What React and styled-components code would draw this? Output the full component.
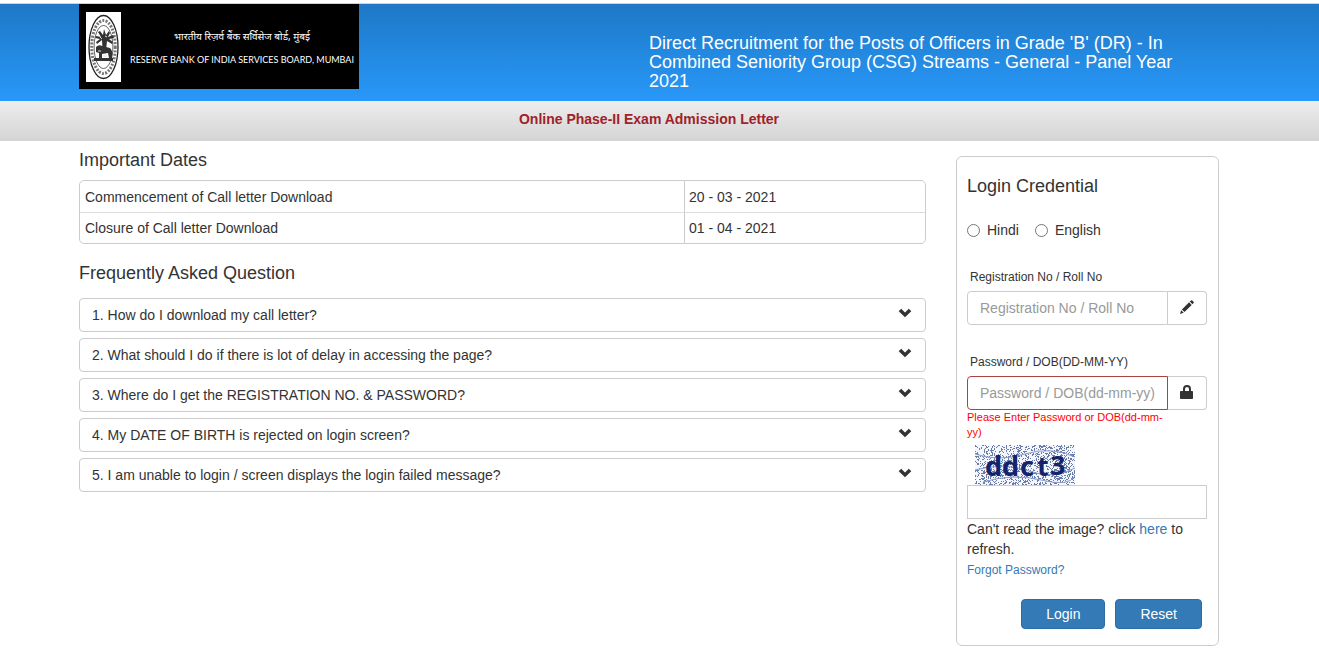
import React, { useState } from 'react';
import styled, { createGlobalStyle } from 'styled-components';

const GlobalStyle = createGlobalStyle`
  * {
    box-sizing: border-box;
  }

  body {
    margin: 0;
    background: #fff;
    color: #333;
    font-family: 'Liberation Sans', Arial, sans-serif;
    font-size: 14px;
    line-height: 20px;
  }

  a {
    color: #337ab7;
    text-decoration: none;
  }
`;

const Page = styled.div`
  padding-top: 3px;
`;

const Container = styled.div`
  width: calc(100% - 40px);
  max-width: 1140px;
  margin: 0 auto;
`;

const Band = styled.div`
  padding-right: 21px;
`;

const Header = styled(Band).attrs({ as: 'header' })`
  border-top: 1px solid #c9d3dc;
  background: linear-gradient(#1e78c6, #2898f9);
`;

const HeaderRow = styled(Container)`
  display: grid;
  grid-template-columns: 1fr 1fr;
  align-items: start;
  min-height: 97px;
`;

const Logo = styled.div`
  display: flex;
  align-items: center;
  gap: 9px;
  width: 280px;
  height: 85px;
  padding-left: 7px;
  background: #000;
  color: #fff;

  svg {
    flex-shrink: 0;
  }
`;

const LogoText = styled.div`
  display: flex;
  flex-direction: column;
  align-items: center;
  gap: 4px;
  padding-top: 2px;
  white-space: nowrap;
`;

const Hindi = styled.span`
  font-family: 'Noto Sans', 'Noto Sans Devanagari', sans-serif;
  font-size: 10px;
  line-height: 20px;
`;

const BoardName = styled.span`
  font-family: Lato, 'Liberation Sans', sans-serif;
  font-size: 9px;
  line-height: 20px;
`;

const Title = styled.h1`
  margin: 0;
  padding: 30px 30px 0 0;
  color: #fff;
  font-size: 18px;
  font-weight: 400;
  line-height: 19px;
`;

const SubBar = styled(Band)`
  height: 40px;
  padding-top: 8px;
  background: linear-gradient(#ededed, #d4d4d4);
  color: #a02128;
  font-weight: 700;
  text-align: center;
`;

const Columns = styled(Container)`
  display: grid;
  grid-template-columns: minmax(0, 847fr) minmax(240px, 263fr);
  gap: 30px;
  align-items: start;
`;

const Heading = styled.h2`
  margin: 0;
  font-size: 18px;
  font-weight: 400;
  line-height: 20px;
`;

const Info = styled.section`
  padding-top: 9px;

  ${Heading} + * {
    margin-top: 10px;
  }
`;

const DatesTable = styled.table`
  width: 100%;
  margin-bottom: 19px;
  border: 1px solid #ccc;
  border-radius: 5px;
  border-spacing: 0;

  td {
    height: 31px;
    padding: 5px 4px;
  }

  td:first-child {
    width: 605px;
    padding-left: 5px;
    border-right: 1px solid #ccc;
  }

  tr + tr td {
    border-top: 1px solid #ddd;
  }
`;

const FaqList = styled.div`
  display: flex;
  flex-direction: column;
  gap: 6px;
  padding-top: 5px;
`;

const FaqItem = styled.button`
  display: flex;
  justify-content: space-between;
  align-items: center;
  height: 34px;
  padding: 0 13px 0 12px;
  border: 1px solid #ccc;
  border-radius: 4px;
  background: #fff;
  color: #333;
  font: inherit;
  text-align: left;

  svg {
    margin-bottom: 4px;
  }
`;

const Card = styled.form`
  margin-top: 15px;
  padding: 19px 11px 16px 10px;
  border: 1px solid #ccc;
  border-radius: 6px;
`;

const Radios = styled.div`
  display: flex;
  gap: 16px;
  margin: 24px 0 27px;
`;

const RadioLabel = styled.label`
  display: flex;
  align-items: center;
  gap: 7px;

  input {
    width: 13px;
    height: 13px;
    margin: 0;
  }
`;

const Label = styled.label`
  display: block;
  padding: 0 3px;
  margin-bottom: 4px;
  font-size: 12px;
`;

const InputGroup = styled.div`
  display: flex;
  height: 34px;
  margin-bottom: ${(p) => p.$gap || 0}px;
`;

const Input = styled.input`
  flex: 1;
  min-width: 0;
  height: 34px;
  padding: 0 12px;
  border: 1px solid ${(p) => (p.$invalid ? '#a94442' : '#ccc')};
  border-radius: 4px 0 0 4px;
  background: #fff;
  color: #555;
  font: inherit;

  &::placeholder {
    color: #999;
    opacity: 1;
  }
`;

const Addon = styled.span`
  display: flex;
  justify-content: center;
  align-items: center;
  width: 39px;
  border: 1px solid #ccc;
  border-left: none;
  border-radius: 0 4px 4px 0;

  svg {
    margin-bottom: 2px;
  }
`;

const ErrorText = styled.p`
  max-width: 200px;
  margin: 0 0 5px;
  color: #f00;
  font-size: 11px;
  line-height: 15px;
`;

const CaptchaImage = styled.svg`
  display: block;
  margin-left: 8px;
`;

const CaptchaInput = styled(Input)`
  display: block;
  width: 100%;
  border-radius: 0;
`;

const Hint = styled.p`
  margin: 0;
`;

const Forgot = styled.a`
  display: block;
  margin-top: 1px;
  font-size: 12px;
  line-height: 20px;
`;

const Actions = styled.div`
  display: flex;
  justify-content: flex-end;
  gap: 10px;
  margin-top: 19px;
  padding-right: 5px;
`;

const Button = styled.button`
  height: 30px;
  padding: 0 24px;
  border: 1px solid #2e6da4;
  border-radius: 4px;
  background: #337ab7;
  color: #fff;
  font: inherit;
`;

const questions = [
  'How do I download my call letter?',
  'What should I do if there is lot of delay in accessing the page?',
  'Where do I get the REGISTRATION NO. & PASSWORD?',
  'My DATE OF BIRTH is rejected on login screen?',
  'I am unable to login / screen displays the login failed message?',
];

const ChevronDown = () => (
  <svg width="14" height="10" viewBox="0 0 14 10" fill="#333" aria-hidden="true">
    <path d="M3.2 .8 7 4.4 10.8 .8 13.3 3.3 7 9.3 .7 3.3Z" />
  </svg>
);

const Pencil = () => (
  <svg width="14" height="14" viewBox="0 0 14 14" fill="#333" aria-hidden="true">
    <path d="M11 .4a1 1 0 0 1 1.2 0l1.4 1.4a1 1 0 0 1 0 1.2l-1.2 1.2-2.6-2.6ZM9.1 2.3l2.6 2.6-7.2 7.2-2.6-2.6ZM1.2 10.3l2.5 2.5L0 14Z" />
  </svg>
);

const Lock = () => (
  <svg width="14" height="14" viewBox="0 0 14 14" fill="#333" aria-hidden="true">
    <path
      fillRule="evenodd"
      d="M3 6V4a4 4 0 0 1 8 0v2h1.2a.8.8 0 0 1 .8.8v6.4a.8.8 0 0 1-.8.8H.8a.8.8 0 0 1-.8-.8V6.8A.8.8 0 0 1 .8 6ZM5 6h4V4a2 2 0 0 0-4 0Z"
    />
  </svg>
);

const Emblem = () => (
  <svg width="35" height="70" viewBox="0 0 35 70" aria-hidden="true">
    <rect width="35" height="70" fill="#fff" />
    <g fill="none" stroke="#222">
      <ellipse cx="17.5" cy="35" rx="14.5" ry="31.5" strokeWidth="1.3" />
      <ellipse cx="17.5" cy="35" rx="11.8" ry="26.5" stroke="#777" strokeWidth="3" strokeDasharray="2 1.4" />
      <ellipse cx="17.5" cy="35" rx="9.4" ry="21.5" strokeWidth=".7" />
    </g>
    <g fill="#333">
      <path d="M16.5 38 16 28l-5 4-1-2 4-3-5-1 1-2 5 1-3-5 2-1 3 4 1-6 2 6 3-4 1 2-2 4 5-2 1 3-5 1 4 3-1 2-5-3-1 9Z" />
      <path d="M10 35q3-3 6-1l8 2q3 2 2 10h-3l-1-5-6 1v4h-3v-5l-3-1ZM8 46h19v3H8Z" />
    </g>
    <path d="M12 39h3M17 44h4M14 25l2 2M19 24l2 1" stroke="#ddd" />
  </svg>
);

// speckles come from a fixed seed so the code looks the same on each render
const speckles = (() => {
  let seed = 71;
  let d = '';
  for (let y = 0; y < 40; y++) {
    for (let x = 0; x < 100; x++) {
      seed = (seed * 16807) % 2147483647;
      if (seed / 2147483647 < 0.32) d += `M${x} ${y}h1v1h-1z`;
    }
  }
  return d;
})();

const Captcha = () => (
  <CaptchaImage width="100" height="40" viewBox="0 0 100 40" role="img" aria-label="Captcha">
    <rect width="100" height="40" fill="#f3f7fd" />
    <path d={speckles} fill="#6b7ba8" shapeRendering="crispEdges" />
    <path
      d="M0 9q24 8 50 0t50 3M0 25q30-8 54 1t46-3M8 37q30-9 58-2t34-4"
      fill="none"
      stroke="#8a9bc6"
      strokeWidth="1"
    />
    <g fill="#14236b" fontFamily="Noto Sans, sans-serif" fontWeight="700" fontSize="27">
      <text x="10" y="31">d</text>
      <text x="27" y="31">d</text>
      <text x="45" y="31">c</text>
      <text x="62" y="31">t</text>
      <text x="75" y="30">3</text>
    </g>
  </CaptchaImage>
);

const LoginForm = () => {
  const [language, setLanguage] = useState('');

  return (
    <Card onSubmit={(e) => e.preventDefault()} noValidate>
      <Heading>Login Credential</Heading>
      <Radios>
        {['Hindi', 'English'].map((name) => (
          <RadioLabel key={name}>
            <input
              type="radio"
              name="language"
              checked={language === name}
              onChange={() => setLanguage(name)}
            />
            {name}
          </RadioLabel>
        ))}
      </Radios>
      <Label htmlFor="regno">Registration No / Roll No</Label>
      <InputGroup $gap={27}>
        <Input id="regno" type="text" placeholder="Registration No / Roll No" />
        <Addon>
          <Pencil />
        </Addon>
      </InputGroup>
      <Label htmlFor="password">Password / DOB(DD-MM-YY)</Label>
      <InputGroup>
        <Input
          id="password"
          type="password"
          placeholder="Password / DOB(dd-mm-yy)"
          aria-describedby="password-error"
          $invalid
        />
        <Addon>
          <Lock />
        </Addon>
      </InputGroup>
      <ErrorText id="password-error">
        Please Enter Password or DOB(dd-mm-yy)
      </ErrorText>
      <Captcha />
      <CaptchaInput type="text" aria-label="Captcha code" />
      <Hint>
        Can't read the image? click <a href="#refresh">here</a> to refresh.
      </Hint>
      <Forgot href="#forgot">Forgot Password?</Forgot>
      <Actions>
        <Button type="submit">Login</Button>
        <Button type="reset" onClick={() => setLanguage('')}>
          Reset
        </Button>
      </Actions>
    </Card>
  );
};

const App = () => (
  <Page>
    <GlobalStyle />
    <Header>
      <HeaderRow>
        <Logo>
          <Emblem />
          <LogoText>
            <Hindi lang="hi">भारतीय रिज़र्व बैंक सर्विसेज बोर्ड, मुंबई</Hindi>
            <BoardName>RESERVE BANK OF INDIA SERVICES BOARD, MUMBAI</BoardName>
          </LogoText>
        </Logo>
        <Title>
          Direct Recruitment for the Posts of Officers in Grade 'B' (DR) - In
          Combined Seniority Group (CSG) Streams - General - Panel Year 2021
        </Title>
      </HeaderRow>
    </Header>
    <SubBar>Online Phase-II Exam Admission Letter</SubBar>
    <Band>
      <Columns>
        <Info>
          <Heading>Important Dates</Heading>
          <DatesTable>
            <tbody>
              <tr>
                <td>Commencement of Call letter Download</td>
                <td>20 - 03 - 2021</td>
              </tr>
              <tr>
                <td>Closure of Call letter Download</td>
                <td>01 - 04 - 2021</td>
              </tr>
            </tbody>
          </DatesTable>
          <Heading>Frequently Asked Question</Heading>
          <FaqList>
            {questions.map((question, i) => (
              <FaqItem key={question} type="button">
                {i + 1}. {question}
                <ChevronDown />
              </FaqItem>
            ))}
          </FaqList>
        </Info>
        <LoginForm />
      </Columns>
    </Band>
  </Page>
);

export default App;
